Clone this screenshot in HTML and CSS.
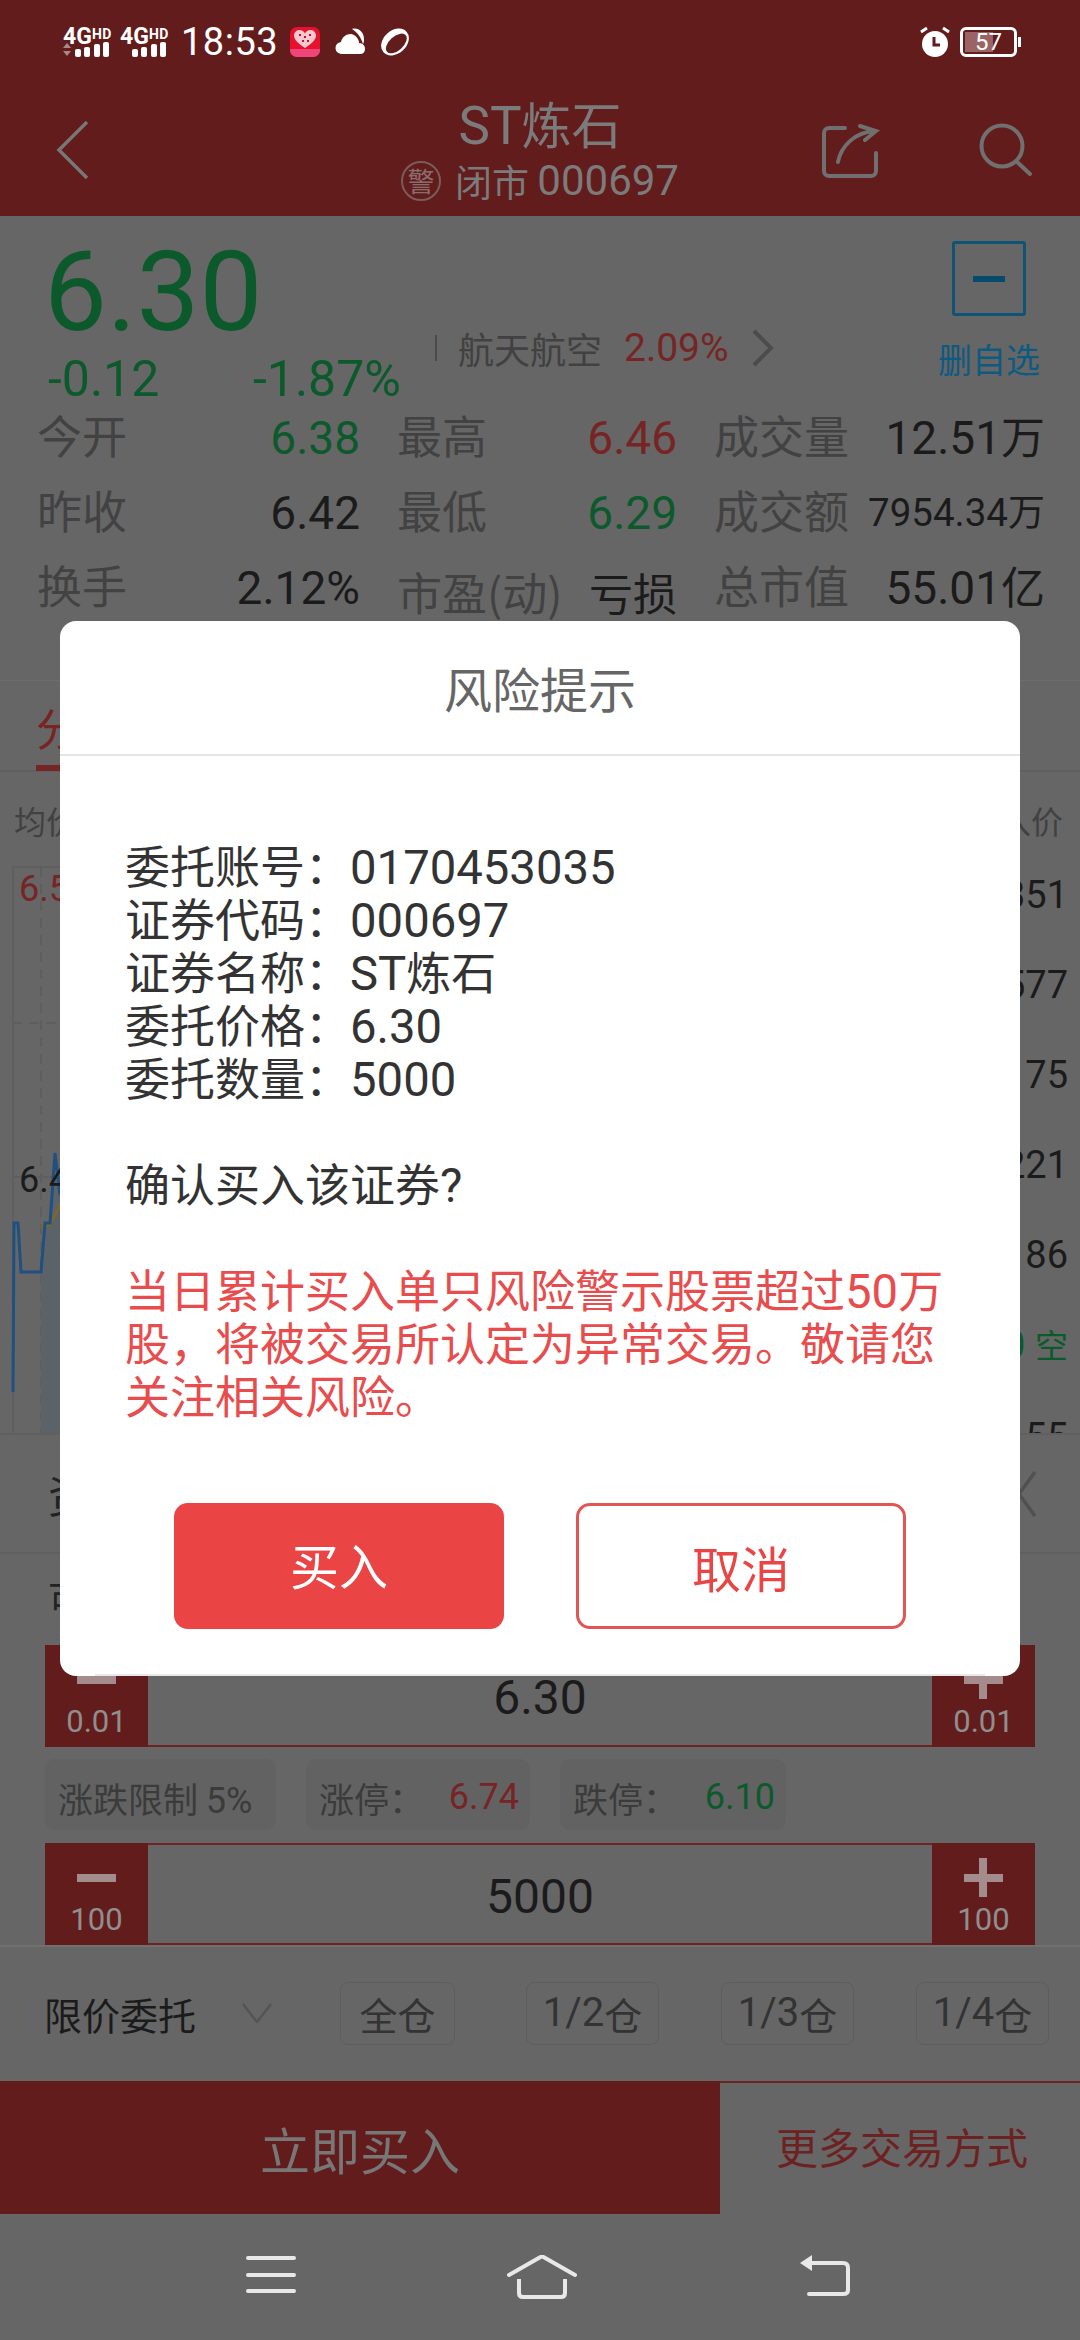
FILE: index.html
```html
<!DOCTYPE html>
<html>
<head>
  <title>ST炼石</title>
  <link rel="stylesheet" href="styles.css">
</head>
<body>
  <div class="screen">
    <div class="top-bar">
      <div class="status-bar">
        <div class="signal">
          <div class="signal-label">4G<small>HD</small></div>
          <svg width="47" height="16" viewBox="0 0 47 16"><path d="M0 6l4-5 4 5zM0 9l4 5 4-5z" fill="#a88"/><g fill="#fff"><rect x="12" y="7" width="6" height="8" rx="2"/><rect x="21" y="5" width="6" height="10" rx="2"/><rect x="31" y="2" width="6" height="13" rx="2"/><rect x="40" y="0" width="6" height="15" rx="2"/></g></svg>
        </div>
        <div class="signal">
          <div class="signal-label">4G<small>HD</small></div>
          <svg width="47" height="16" viewBox="0 0 47 16"><g fill="#fff"><rect x="12" y="7" width="6" height="8" rx="2"/><rect x="21" y="5" width="6" height="10" rx="2"/><rect x="31" y="2" width="6" height="13" rx="2"/><rect x="40" y="0" width="6" height="15" rx="2"/></g></svg>
        </div>
        <span class="clock">18:53</span>
        <svg class="app-icon" width="30" height="30" viewBox="0 0 30 30"><rect width="30" height="30" rx="7" fill="#e8112d"/><path d="M0 22h30v1a7 7 0 0 1-7 7H7a7 7 0 0 1-7-7z" fill="#f0457a"/><path d="M15 21C9 17 4 13 4 8.500 4 5 7 3 9.500 3 12 3 14 4.500 15 6.500 16 4.500 18 3 20.500 3 23 3 26 5 26 8.500 26 13 21 17 15 21z" fill="#f4c9cf"/><path d="M9 7h2v2H9zM14 9h2v2h-2zM19 7h2v2h-2zM12 13h2v2h-2zM17 13h2v2h-2z" fill="#c8102e"/></svg>
        <svg width="30" height="30" viewBox="0 0 30 30"><path d="M17 2c6-2 12 3 12 10 0 2 0 3-1 5-2-7-6-12-11-15z" fill="#fff"/><path d="M7 27a6 6 0 0 1-1-12c1-5 5-8 10-8 5 1 8 5 8 9 4 0 6 3 6 6s-2 5-5 5z" fill="#fff"/></svg>
        <svg width="30" height="30" viewBox="0 0 30 30"><g transform="rotate(-42 15 15)"><ellipse cx="15" cy="15" rx="15.500" ry="11.500" fill="#fff"/><ellipse cx="15" cy="17" rx="12.500" ry="7" fill="#631c1c"/></g></svg>
        <div class="status-right">
          <svg width="32" height="32" viewBox="0 0 32 32"><circle cx="16" cy="18" r="13" fill="#fff"/><path d="M15 11v8h6" fill="none" stroke="#631c1c" stroke-width="3"/><path d="M2 6l6-4M30 6l-6-4" stroke="#fff" stroke-width="3"/></svg>
          <div class="battery"><div class="battery-fill"></div><span>57</span></div>
        </div>
      </div>
      <div class="nav-bar">
        <div class="nav-left">
          <svg width="34" height="60" viewBox="0 0 34 60"><path d="M31 2L3 30l28 28" fill="none" stroke="#777" stroke-width="3.500"/></svg>
        </div>
        <div class="nav-title">
          <div class="stock-name"><span class="en">ST</span>炼石</div>
          <div class="stock-sub"><span class="warn-badge">警</span>闭市 <span class="code">000697</span></div>
        </div>
        <div class="nav-right">
          <svg width="60" height="58" viewBox="820 122 60 58" fill="none" stroke="#707070" stroke-width="4" stroke-linecap="round"><path d="M845 128h-16a5 5 0 0 0-5 5v38a5 5 0 0 0 5 5h42a5 5 0 0 0 5-5v-18"/><path d="M838 162c3-16 17-30 37-31M860 126l16 5-11 9"/></svg>
          <svg width="56" height="56" viewBox="978 124 56 56" fill="none" stroke="#707070" stroke-width="4" stroke-linecap="round"><circle cx="1002" cy="148" r="20.500"/><path d="M1016 163l14 13"/></svg>
        </div>
      </div>
    </div>

    <div class="quote">
      <div class="quote-head">
        <div class="quote-price">
          <div class="price green">6.30</div>
          <div class="change green"><span class="change-abs">-0.12</span><span>-1.87%</span></div>
        </div>
        <div class="sector">
          <span class="sector-bar"></span>
          <span class="sector-name">航天航空</span>
          <span class="sector-pct red">2.09%</span>
          <svg width="24" height="38" viewBox="0 0 24 38"><path d="M3 2l17 17L3 36" fill="none" stroke="#4c4c4c" stroke-width="4"/></svg>
        </div>
        <div class="fav">
          <div class="fav-box"><span></span></div>
          <div class="fav-label">删自选</div>
        </div>
      </div>
      <div class="stats">
        <div class="stat"><span class="stat-label">今开</span><span class="stat-value green"><span class="n">6.38</span></span></div>
        <div class="stat"><span class="stat-label">最高</span><span class="stat-value red"><span class="n">6.46</span></span></div>
        <div class="stat"><span class="stat-label">成交量</span><span class="stat-value"><span class="n">12.51</span>万</span></div>
        <div class="stat"><span class="stat-label">昨收</span><span class="stat-value"><span class="n">6.42</span></span></div>
        <div class="stat"><span class="stat-label">最低</span><span class="stat-value green"><span class="n">6.29</span></span></div>
        <div class="stat"><span class="stat-label">成交额</span><span class="stat-value stat-small"><span class="n">7954.34</span>万</span></div>
        <div class="stat"><span class="stat-label">换手</span><span class="stat-value"><span class="n">2.12%</span></span></div>
        <div class="stat stat-low"><span class="stat-label">市盈(动)</span><span class="stat-value">亏损</span></div>
        <div class="stat"><span class="stat-label">总市值</span><span class="stat-value"><span class="n">55.01</span>亿</span></div>
      </div>
    </div>

    <div class="tabs"><span class="tab-active">分时</span></div>

    <div class="chart-head"><span>均价</span><span>入价</span></div>
    <div class="chart-body">
      <div class="plot">
        <svg width="900" height="583" viewBox="0 850 900 583">
          <path d="M12 867H900M12 1177H900" stroke="#5f5f5f" stroke-width="2" fill="none"/>
          <path d="M13 867V1433" stroke="#5f5f5f" stroke-width="2" fill="none"/>
          <path d="M41 867V1433M12 1023H900" stroke="#5e5e5e" stroke-width="2" stroke-dasharray="10 7" fill="none"/>
          <path d="M41 1272L45 1223 50 1223 55 1153 60 1195 100 1195V1433H41z" fill="#5b6369"/>
          <path d="M41 1227L50 1225 60 1205" stroke="#80681f" stroke-width="2.500" fill="none"/>
          <path d="M13 1392L14 1223 18 1223 21 1272 41 1272 45 1223 50 1223 55 1153 60 1195" stroke="#1f5080" stroke-width="3" fill="none"/>
        </svg>
        <span class="plot-high red">6.52</span>
        <span class="plot-mid">6.42</span>
      </div>
      <ul class="depth">
        <li>1351</li>
        <li>577</li>
        <li>1175</li>
        <li>221</li>
        <li>86</li>
        <li class="green"><b>0</b><span class="depth-side">空</span></li>
        <li>55</li>
      </ul>
    </div>

    <div class="trade">
      <div class="trade-head">
        <span>资金</span>
        <svg width="36" height="46" viewBox="0 0 36 46"><path d="M35 1L3 45M3 1l32 44" stroke="#505050" stroke-width="3.500" fill="none"/></svg>
      </div>
      <div class="trade-row"><span>可用</span></div>
      <div class="stepper">
        <div class="step-btn"><span class="step-sign"></span><span class="step-num">0.01</span></div>
        <div class="step-value">6.30</div>
        <div class="step-btn"><span class="step-sign step-plus"></span><span class="step-num">0.01</span></div>
      </div>
      <div class="chips">
        <div class="chip chip-limit"><span>涨跌限制 <span class="n">5%</span></span></div>
        <div class="chip chip-up">涨停：<span class="n red">6.74</span></div>
        <div class="chip chip-down">跌停：<span class="n green">6.10</span></div>
      </div>
      <div class="stepper stepper-qty">
        <div class="step-btn"><span class="step-sign"></span><span class="step-num">100</span></div>
        <div class="step-value">5000</div>
        <div class="step-btn"><span class="step-sign step-plus"></span><span class="step-num">100</span></div>
      </div>
      <div class="order-row">
        <span class="order-type">限价委托</span>
        <svg class="order-arrow" width="30" height="20" viewBox="0 0 30 20"><path d="M1 1l14 18L29 1" fill="none" stroke="#545454" stroke-width="2.500"/></svg>
        <span class="pos-btn pos-full">全仓</span>
        <span class="pos-btn"><span class="n">1/2</span>仓</span>
        <span class="pos-btn"><span class="n">1/3</span>仓</span>
        <span class="pos-btn"><span class="n">1/4</span>仓</span>
      </div>
    </div>

    <div class="action-bar">
      <div class="action-buy">立即买入</div>
      <div class="action-more">更多交易方式</div>
    </div>

    <div class="sys-nav">
      <svg width="50" height="38" viewBox="0 0 50 38"><path d="M2 3h46M2 20h46M2 36h46" stroke="#e8e8e8" stroke-width="4" stroke-linecap="round"/></svg>
      <svg class="sys-home" width="70" height="44" viewBox="0 0 70 44"><path d="M2 20L33.500 2q1.500-1 3 0L68 20" fill="none" stroke="#e8e8e8" stroke-width="4" stroke-linecap="round"/><path d="M12 24v14q0 4 4 4h38q4 0 4-4V24" fill="none" stroke="#e8e8e8" stroke-width="4"/></svg>
      <svg class="sys-back" width="52" height="42" viewBox="0 0 52 42"><path d="M1 8L13 0v16z" fill="#e8e8e8"/><path d="M8 8h36q5 0 5 5v22q0 4-5 4H10" fill="none" stroke="#e8e8e8" stroke-width="4" stroke-linecap="round"/></svg>
    </div>

    <div class="modal">
      <div class="modal-title">风险提示</div>
      <div class="modal-body">
        <p>委托账号：<span class="n">0170453035</span></p>
        <p>证券代码：<span class="n">000697</span></p>
        <p>证券名称：<span class="n">ST</span>炼石</p>
        <p>委托价格：<span class="n">6.30</span></p>
        <p>委托数量：<span class="n">5000</span></p>
        <p class="modal-gap">确认买入该证券<span class="n">?</span></p>
        <p class="modal-gap modal-warn">当日累计买入单只风险警示股票超过<span class="n">50</span>万股，将被交易所认定为异常交易。敬请您关注相关风险。</p>
      </div>
      <div class="modal-actions">
        <div class="modal-btn modal-btn-ok">买入</div>
        <div class="modal-btn modal-btn-cancel">取消</div>
      </div>
    </div>
  </div>
</body>
</html>
```

FILE: styles.css
```css
* {
  box-sizing: border-box;
}
body {
  margin: 0;
  font-family: "Noto Sans CJK SC", sans-serif;
}
.screen {
  position: relative;
  width: 1080px;
  height: 2340px;
  overflow: hidden;
  background-color: #666666;
  color: #1b1b1b;
}
.n {
  font-family: Roboto, "Noto Sans CJK SC", sans-serif;
  font-size: 1.05em;
  line-height: 0;
}
.green {
  color: #0c5a2c;
}
.red {
  color: #772424;
}

/* top bar */
.top-bar {
  height: 216px;
  background-color: #631c1c;
}
.status-bar {
  display: flex;
  align-items: center;
  height: 84px;
  padding-left: 63px;
  color: #fff;
}
.signal {
  width: 47px;
  margin-right: 10px;
}
.signal svg {
  display: block;
}
.signal-label {
  height: 15px;
  font: bold 23px/15px Roboto, sans-serif;
  white-space: nowrap;
}
.signal-label small {
  font-size: 14px;
  vertical-align: 5px;
  letter-spacing: 0.5px;
}
.clock {
  margin: 0 12px 0 4px;
  font: 38px/44px Roboto, sans-serif;
  letter-spacing: 0.5px;
}
.app-icon {
  margin-right: 15px;
}
.status-bar > svg + svg {
  margin-right: 15px;
}
.status-right {
  display: flex;
  align-items: center;
  margin-left: auto;
  padding-right: 63px;
}
.battery {
  position: relative;
  width: 57px;
  height: 30px;
  margin-left: 9px;
  border: 3px solid #fff;
  border-radius: 6px;
  font: 24px/24px Roboto, sans-serif;
  text-align: center;
}
.battery::after {
  content: "";
  position: absolute;
  right: -7px;
  top: 7px;
  width: 3px;
  height: 10px;
  background-color: #fff;
}
.battery-fill {
  position: absolute;
  left: 2px;
  top: 2px;
  bottom: 2px;
  width: 28px;
  background-color: #9a6464;
}
.battery span {
  position: relative;
}
.nav-bar {
  display: grid;
  grid-template-columns: 1fr auto 1fr;
  height: 132px;
}
.nav-left {
  padding: 36px 0 0 56px;
}
.nav-title {
  padding-top: 7px;
  text-align: center;
  color: #7b7b7b;
}
.stock-name {
  font-size: 50px;
  line-height: 62px;
}
.stock-name .en {
  font-family: Roboto, sans-serif;
  font-size: 53px;
}
.stock-sub {
  display: flex;
  align-items: center;
  justify-content: center;
  gap: 14px;
  margin-top: 3px;
  font-size: 37px;
  line-height: 42px;
  white-space: pre;
}
.stock-sub .code {
  margin-left: -14px;
  font-family: Roboto, sans-serif;
  font-size: 42px;
}
.warn-badge {
  display: flex;
  align-items: center;
  justify-content: center;
  width: 40px;
  height: 40px;
  border: 2px solid #7b5c5c;
  border-radius: 50%;
  font-size: 27px;
  color: #8a6e6e;
}
.nav-right {
  display: flex;
  justify-content: flex-end;
  gap: 98px;
  padding: 38px 46px 0 0;
}
.nav-right svg {
  display: block;
}

/* quote */
.quote {
  height: 464px;
}
.quote-head {
  display: flex;
  height: 181px;
  padding: 0 40px 0 44px;
}
.quote-price {
  width: 391px;
  flex-shrink: 0;
}
.price {
  margin-top: 26px;
  font: 112px/100px Roboto, sans-serif;
}
.change {
  display: flex;
  margin: 14px 0 0 4px;
  font: 50px/46px Roboto, sans-serif;
}
.change-abs {
  width: 205px;
}
.sector {
  display: flex;
  align-items: center;
  height: 40px;
  margin-top: 112px;
}
.sector-bar {
  width: 2px;
  height: 26px;
  margin-right: 21px;
  background-color: #4a4a4a;
}
.sector-name {
  width: 166px;
  font-size: 36px;
  color: #414141;
}
.sector-pct {
  width: 127px;
  font: 39px/40px Roboto, sans-serif;
}
.fav {
  margin-left: auto;
  padding-top: 25px;
  text-align: center;
}
.fav-box {
  display: flex;
  align-items: center;
  justify-content: center;
  width: 74px;
  height: 75px;
  margin: 0 auto;
  border: 3px solid #0f5472;
  border-radius: 3px;
}
.fav-box span {
  width: 32px;
  height: 6px;
  background-color: #064a6c;
}
.fav-label {
  margin-top: 19px;
  font-size: 34px;
  line-height: 48px;
  color: #0e5a80;
}
.stats {
  display: grid;
  grid-template-columns: 323px 280px 331px;
  grid-auto-rows: 75px;
  column-gap: 37px;
  padding-left: 37px;
}
.stat {
  display: flex;
  align-items: center;
  justify-content: space-between;
  font-size: 44px;
  white-space: nowrap;
}
.stat-low {
  padding-top: 14px;
}
.stat-label {
  font-size: 45px;
  color: #424242;
}
.stat-small {
  font-size: 37px;
}
.stat-value .n {
  font-size: 46px;
}
.stat-small .n {
  font-size: 38.500px;
}

/* tabs and chart */
.tabs {
  height: 92px;
  padding-left: 36px;
  border-top: 1px solid #6c6c6c;
  border-bottom: 2px solid #5f5f5f;
}
.tab-active {
  display: inline-block;
  height: 90px;
  padding-top: 16px;
  border-bottom: 6px solid #772424;
  font-size: 44px;
  line-height: 60px;
  color: #772424;
}
.chart-head {
  display: flex;
  justify-content: space-between;
  height: 78px;
  padding: 26px 17px 0 14px;
  font-size: 32px;
  line-height: 44px;
  color: #414141;
}
.chart-body {
  display: flex;
  justify-content: space-between;
  height: 583px;
  overflow: hidden;
}
.plot {
  position: relative;
  width: 900px;
}
.plot svg {
  display: block;
}
.plot-high,
.plot-mid {
  position: absolute;
  left: 19px;
  font: 36px/40px Roboto, sans-serif;
}
.plot-high {
  top: 19px;
}
.plot-mid {
  top: 310px;
}
.depth {
  margin: 0;
  padding: 0 12px 0 0;
  list-style: none;
  font: 38px/90px Roboto, "Noto Sans CJK SC", sans-serif;
  text-align: right;
}
.depth b {
  font-weight: 500;
}
.depth-side {
  margin-left: 10px;
  font-size: 33px;
}

/* trade panel */
.trade {
  height: 648px;
  border-top: 2px solid #606060;
}
.trade-head {
  display: flex;
  align-items: center;
  justify-content: space-between;
  height: 119px;
  padding: 0 44px 0 48px;
  border-bottom: 2px solid #606060;
  font-size: 44px;
  color: #222;
}
.trade-row {
  height: 91px;
  padding: 18px 0 0 48px;
  font-size: 38px;
  line-height: 50px;
  color: #222;
}
.stepper {
  display: flex;
  justify-content: space-between;
  height: 102px;
  margin: 0 45px;
  border-bottom: 2px solid #6e2424;
}
.stepper-qty {
  margin-top: 13px;
  border-top: 2px solid #6e2424;
}
.step-btn {
  display: flex;
  flex-direction: column;
  align-items: center;
  width: 103px;
  margin-bottom: -2px;
  padding-top: 15px;
  background-color: #631c1c;
  color: #8f8f8f;
}
.stepper-qty .step-btn {
  margin-top: -2px;
}
.step-sign {
  position: relative;
  width: 39px;
  height: 39px;
  flex-shrink: 0;
}
.step-sign::before,
.step-plus::after {
  content: "";
  position: absolute;
  background-color: #a58c8c;
}
.step-sign::before {
  left: 0;
  right: 0;
  top: 16px;
  height: 8px;
}
.step-plus::after {
  top: 0;
  bottom: 0;
  left: 15px;
  width: 8px;
}
.step-num {
  margin-top: 5px;
  font: 31px/36px Roboto, sans-serif;
}
.step-value {
  align-self: center;
  padding-top: 6px;
  font: 48px/52px Roboto, sans-serif;
}
.chips {
  display: flex;
  gap: 30px;
  margin: 12px 45px 0;
}
.chip {
  display: flex;
  align-items: center;
  justify-content: space-between;
  height: 71px;
  padding: 5px 11px 0 13px;
  border-radius: 10px;
  background-color: #626262;
  font-size: 35px;
  color: #3b3b3b;
  white-space: pre;
}
.chip-limit {
  width: 231px;
}
.chip-up {
  width: 224px;
}
.chip-down {
  width: 226px;
}
.chip .n {
  font-size: 36px;
}
.order-row {
  display: flex;
  align-items: center;
  height: 134px;
  padding-left: 44px;
  border-top: 2px solid #707070;
  font-size: 38px;
}
.order-type {
  width: 198px;
  flex-shrink: 0;
}
.order-arrow {
  margin-right: 68px;
  flex-shrink: 0;
}
.pos-btn {
  display: flex;
  align-items: center;
  justify-content: center;
  flex-shrink: 0;
  width: 133px;
  height: 63px;
  margin-right: 62px;
  border: 1px solid #5d5d5d;
  border-radius: 8px;
  color: #333;
}
.pos-btn .n {
  font-size: 40px;
}
.pos-full {
  width: 115px;
  margin-right: 71px;
}

/* bottom */
.action-bar {
  display: flex;
  height: 133px;
  border-top: 2px solid #6e2424;
}
.action-buy {
  width: 720px;
  margin-top: -2px;
  background-color: #631c1c;
  font-size: 50px;
  line-height: 135px;
  text-align: center;
  color: #777;
}
.action-more {
  flex: 1;
  padding-left: 56px;
  font-size: 42px;
  line-height: 126px;
  color: #6d2222;
}
.sys-nav {
  display: flex;
  align-items: flex-start;
  gap: 211px;
  height: 126px;
  padding: 41px 0 0 246px;
}
.sys-back {
  margin-left: 11px;
}

/* dialog */
.modal {
  position: absolute;
  left: 60px;
  top: 621px;
  width: 960px;
  height: 1055px;
  border-radius: 16px;
  background-color: #fff;
}
.modal::after {
  content: "";
  position: absolute;
  left: 35px;
  right: 35px;
  bottom: 0;
  height: 2px;
  background-color: #e8e8e8;
}
.modal-title {
  height: 135px;
  border-bottom: 2px solid #e5e5e5;
  font-size: 48px;
  line-height: 133px;
  text-align: center;
  color: #666;
}
.modal-body {
  padding: 82px 65px 0;
  font-size: 45px;
  line-height: 53px;
  color: #333;
}
.modal-body p {
  margin: 0;
}
.modal-body .modal-gap {
  margin-top: 53px;
}
.modal-body .modal-warn {
  color: #e94c4c;
}
.modal-actions {
  display: flex;
  gap: 72px;
  padding: 82px 0 0 114px;
}
.modal-btn {
  width: 330px;
  height: 126px;
  border-radius: 14px;
  font-size: 49px;
  line-height: 122px;
  text-align: center;
}
.modal-btn-ok {
  background-color: #ea4444;
  color: #fff;
}
.modal-btn-cancel {
  border: 3px solid #e25555;
  color: #e94545;
}
```
